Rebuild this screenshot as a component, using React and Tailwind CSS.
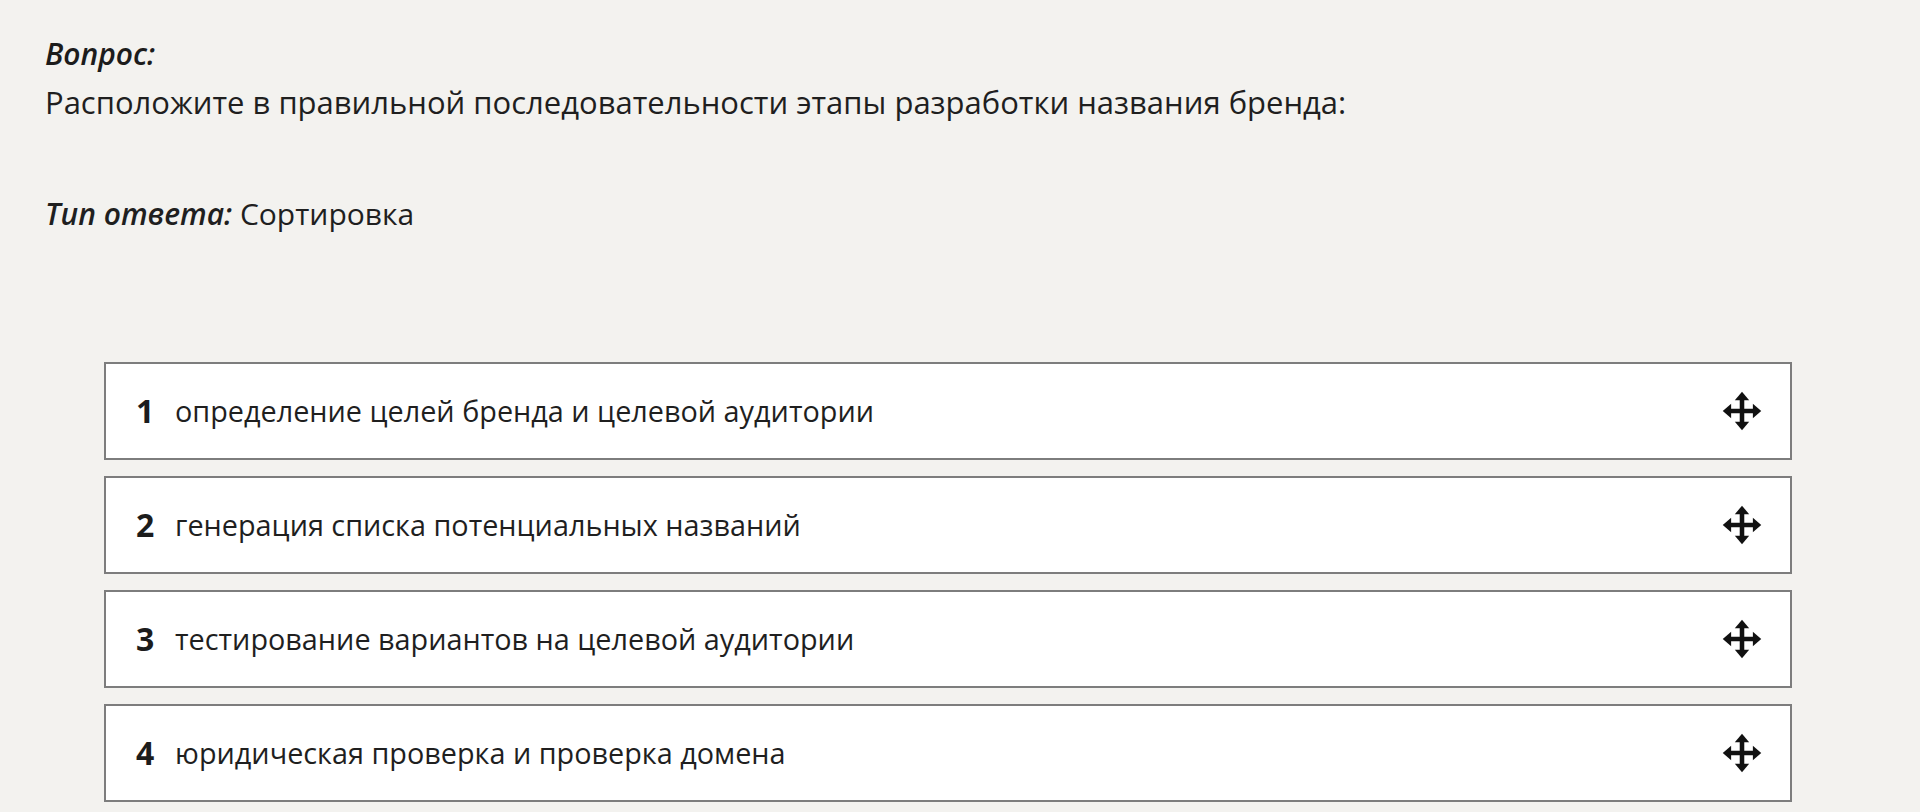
import React from "react";

const steps = [
  "определение целей бренда и целевой аудитории",
  "генерация списка потенциальных названий",
  "тестирование вариантов на целевой аудитории",
  "юридическая проверка и проверка домена",
];

// four-way drag handle
const MoveIcon = () => (
  <svg width="42" height="42" viewBox="0 0 24 24" fill="#111">
    <path d="M12 4.5v15M4.5 12h15" stroke="#111" strokeWidth="2.6" fill="none" />
    <polygon points="12,1 7.9,5.8 16.1,5.8" />
    <polygon points="12,23 7.9,18.2 16.1,18.2" />
    <polygon points="1,12 5.8,7.9 5.8,16.1" />
    <polygon points="23,12 18.2,7.9 18.2,16.1" />
  </svg>
);

const SortItem = ({ index, text }) => (
  <div className="h-[98px] flex items-center bg-white border-2 border-[#7d7d7d] pl-[30px] pr-[27px]">
    <span className="w-[39px] text-[32px] font-bold text-[#1c1c1c]">{index}</span>
    <span className="flex-1 text-[28.8px] text-[#1f1f1f]">{text}</span>
    <MoveIcon />
  </div>
);

export default function App() {
  return (
    <div
      className="min-h-screen bg-[#f3f2ef] pl-[45px] pt-[36px] pb-10"
      style={{ fontFamily: '"Open Sans", "Noto Sans", sans-serif' }}
    >
      {/* question header */}
      <div className="text-[30px] leading-[36px] font-semibold italic text-[#1c1c1c]">Вопрос:</div>
      <div className="mt-[10px] text-[31px] leading-[40px] text-[#1f1f1f]">
        Расположите в правильной последовательности этапы разработки названия бренда:
      </div>

      <div className="mt-[74px] text-[30px] leading-[36px] text-[#1f1f1f]">
        <span className="font-semibold italic">Тип ответа:</span> Сортировка
      </div>

      {/* sortable answers */}
      <div className="mt-[130px] ml-[59px] mr-[128px] flex flex-col gap-[16px]">
        {steps.map((s, i) => (
          <SortItem key={i} index={i + 1} text={s} />
        ))}
      </div>
    </div>
  );
}
